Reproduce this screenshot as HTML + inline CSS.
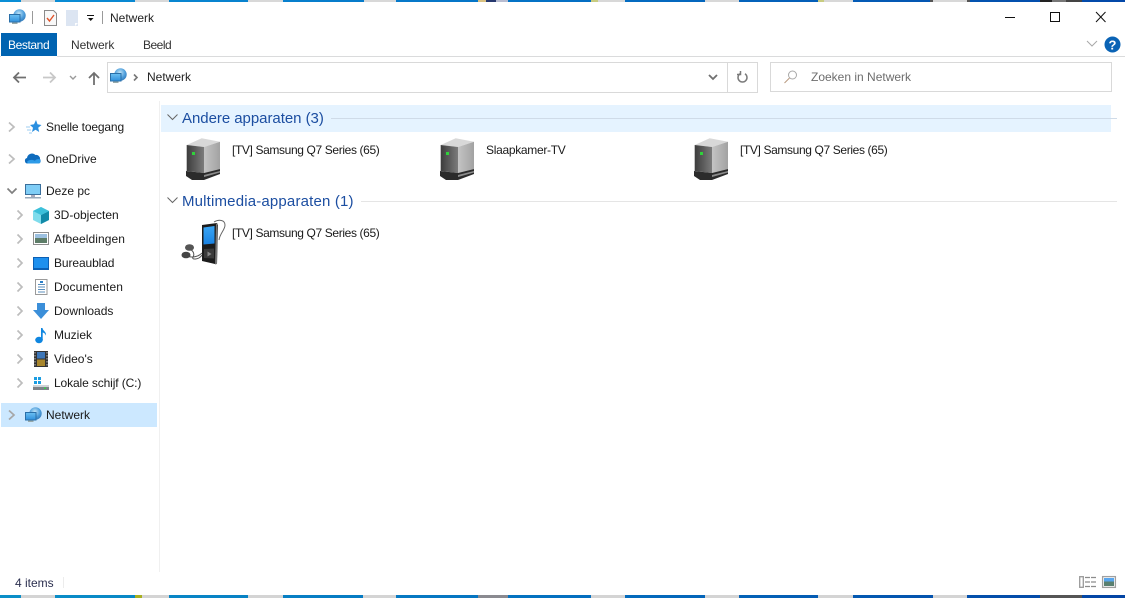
<!DOCTYPE html>
<html lang="nl"><head><meta charset="utf-8"><title>Netwerk</title>
<style>
html,body{margin:0;padding:0;background:#fff}
#w{position:relative;width:1125px;height:598px;overflow:hidden;background:#fff;font-family:"Liberation Sans",sans-serif;font-size:12px;color:#1a1a1a}
.t{position:absolute;white-space:nowrap;line-height:16px}
.b{position:absolute}
svg{position:absolute;overflow:visible}
.g{color:#1c4ea1;font-size:15px;line-height:18px}
.i{letter-spacing:-.37px}
</style></head><body><div id="w">

<svg width="0" height="0" style="left:0;top:0">
<defs>
<radialGradient id="gl" cx=".45" cy=".35" r=".75"><stop offset="0" stop-color="#bfe3f7"/><stop offset=".55" stop-color="#4f9fdc"/><stop offset="1" stop-color="#2a6fb0"/></radialGradient>
<linearGradient id="mn" x1="0" x2="0" y1="0" y2="1"><stop offset="0" stop-color="#6cc0f2"/><stop offset="1" stop-color="#2f8fdc"/></linearGradient>
<linearGradient id="d" x1="0" x2="1" y1="0" y2="0"><stop offset="0" stop-color="#3c3c3c"/><stop offset="1" stop-color="#7c7c7c"/></linearGradient>
<linearGradient id="e" x1="0" x2="1" y1="0" y2="0"><stop offset="0" stop-color="#c4c4c4"/><stop offset="1" stop-color="#a2a2a2"/></linearGradient>
<linearGradient id="scr" x1="0" x2="0" y1="0" y2="1"><stop offset="0" stop-color="#3aa6f5"/><stop offset="1" stop-color="#1a82e2"/></linearGradient>
<g id="net"><circle cx="10.500" cy="6.500" r="6.200" fill="url(#gl)"/><rect x=".5" y="5.500" width="10.500" height="7.500" fill="url(#mn)" stroke="#2a6fa8"/><rect x="3" y="13.500" width="5.500" height="1.500" fill="#9aa"/></g>
<g id="srv">
<path d="M.7 7L15.700 .3 34 3.700 18 9z" fill="#d8d8d8"/>
<path d="M.7 7L18 9v26L.7 33z" fill="url(#d)"/>
<path d="M18 9l16-5.300V31l-16 4z" fill="url(#e)"/>
<rect x="6" y="14" width="3" height="3" fill="#2fd23a"/>
<path d="M0 33l18 2 16-4v5L18 42H6l-6-4z" fill="#2b2b2b"/>
<path d="M18 37l16-4v1.500L18 39z" fill="#8c8c8c"/>
</g>
</defs></svg>

<!-- top / bottom strips -->
<svg style="left:0;top:0" width="1125" height="2">
<defs><linearGradient id="s" x1="0" x2="1" y1="0" y2="0"><stop offset="0" stop-color="#0a8fd6"/><stop offset=".5" stop-color="#0470c4"/><stop offset="1" stop-color="#0348a8"/></linearGradient></defs>
<rect width="1125" height="2" fill="url(#s)"/>
<g fill="#d8d8d8"><rect x="21" width="34" height="2"/><rect x="135" width="34" height="2"/><rect x="248" width="35" height="2"/><rect x="364" width="32" height="2"/><rect x="591" width="34" height="2"/><rect x="705" width="34" height="2"/><rect x="818" width="35" height="2"/><rect x="933" width="34" height="2"/></g>
<rect x="478" width="8" height="2" fill="#d8c080"/><rect x="486" width="10" height="2" fill="#26386e"/><rect x="496" width="12" height="2" fill="#b8bcd0"/>
<rect x="591" width="7" height="2" fill="#c8cc80"/><rect x="818" width="6" height="2" fill="#c8cc80"/>
<rect x="930" width="3" height="2" fill="#555"/><rect x="967" width="3" height="2" fill="#555"/>
<rect x="1040" width="12" height="2" fill="#222"/><rect x="1052" width="14" height="2" fill="#777"/><rect x="1066" width="16" height="2" fill="#444"/>
</svg>
<svg style="left:0;top:595px" width="1125" height="3">
<defs><linearGradient id="s2" x1="0" x2="1" y1="0" y2="0"><stop offset="0" stop-color="#0a8fc8"/><stop offset=".5" stop-color="#0470c0"/><stop offset="1" stop-color="#0344a4"/></linearGradient></defs>
<rect width="1125" height="3" fill="url(#s2)"/>
<g fill="#d4d4d4"><rect x="21" width="34" height="3"/><rect x="135" width="34" height="3"/><rect x="248" width="35" height="3"/><rect x="363" width="33" height="3"/><rect x="591" width="34" height="3"/><rect x="705" width="34" height="3"/><rect x="818" width="35" height="3"/><rect x="933" width="34" height="3"/></g>
<rect x="135" width="7" height="3" fill="#a8b020"/><rect x="478" width="30" height="3" fill="#8a8a90"/><rect x="1040" width="42" height="3" fill="#555"/>
</svg>

<!-- title bar -->
<svg style="left:9px;top:9px" width="17" height="17" viewBox="0 0 17 17"><use href="#net"/></svg>
<div class="b" style="left:32px;top:11px;width:1px;height:13px;background:#9a9a9a"></div>
<svg style="left:44px;top:10px" width="13" height="16" viewBox="0 0 13 16"><path d="M.5.5h9l3 3v12H.5z" fill="#f8f8f8" stroke="#8a8a8a"/><path d="M3 8l2.500 3L10 5" fill="none" stroke="#e0542a" stroke-width="1.400"/></svg>
<svg style="left:66px;top:10px" width="13" height="16" viewBox="0 0 13 16"><path d="M0 0h12v16H0z" fill="#dce5f2"/><path d="M9 16v-3h3" fill="#fff"/></svg>
<svg style="left:87px;top:15px" width="8" height="8"><path d="M0 .5h7" stroke="#111"/><path d="M1 3h5.500L3.700 6z" fill="#111"/></svg>
<div class="b" style="left:102px;top:11px;width:1px;height:13px;background:#9a9a9a"></div>
<div class="t" style="left:110px;top:10px;color:#222">Netwerk</div>
<svg style="left:1000px;top:10px" width="112" height="16" fill="none" stroke="#111" stroke-width="1"><path d="M5 7.500h10"/><rect x="50.500" y="2.500" width="9" height="9"/><path d="M96 2l9.500 10M105.500 2L96 12"/></svg>

<!-- ribbon -->
<div class="b" style="left:1px;top:33px;width:56px;height:23px;background:#0063b1"></div>
<div class="t" style="left:8px;top:37px;color:#fff;letter-spacing:-.4px">Bestand</div>
<div class="t" style="left:71px;top:37px;color:#333;letter-spacing:-.1px">Netwerk</div>
<div class="t" style="left:143px;top:37px;color:#333;letter-spacing:-.5px">Beeld</div>
<div class="b" style="left:57px;top:56px;width:1068px;height:1px;background:#dadbdc"></div>
<div class="b" style="left:0;top:56px;width:1px;height:1px;background:#dadbdc"></div>
<svg style="left:1086px;top:40px" width="12" height="8" fill="none" stroke="#a8a8a8"><path d="M1 1l5 5 5-5"/></svg>
<svg style="left:1104px;top:36px" width="17" height="17"><circle cx="8.500" cy="8.500" r="8" fill="#0a63b5"/><text x="8.500" y="13.500" text-anchor="middle" font-family="Liberation Sans" font-weight="bold" font-size="13" fill="#fff">?</text></svg>

<!-- nav -->
<svg style="left:13px;top:70px" width="90" height="16" fill="none" stroke-width="1.800">
<path d="M1 7.500h12M6 2.500l-5 5 5 5" stroke="#707070"/>
<path d="M30 7.500h12M37 2.500l5 5-5 5" stroke="#c8c8c8"/>
<path d="M57 6l3 3 3-3" stroke="#9a9a9a" stroke-width="1.400"/>
<path d="M81 15V3M76 8l5-5 5 5" stroke="#707070"/>
</svg>
<div class="b" style="left:107px;top:62px;width:649px;height:29px;border:1px solid #d9d9d9"></div>
<div class="b" style="left:727px;top:63px;width:1px;height:29px;background:#d9d9d9"></div>
<svg style="left:110px;top:68px" width="17" height="17" viewBox="0 0 17 17"><use href="#net"/></svg>
<svg style="left:133px;top:74px" width="5" height="7" fill="none" stroke="#777" stroke-width="1.600"><path d="M1 .5l3 3-3 3"/></svg>
<div class="t" style="left:147px;top:69px;color:#222">Netwerk</div>
<svg style="left:708px;top:74px" width="11" height="7" fill="none" stroke="#707070" stroke-width="1.800"><path d="M1 1l4 4 4-4"/></svg>
<svg style="left:737px;top:71px" width="12" height="13" fill="none" stroke="#7a7a7a" stroke-width="1.500"><path d="M3 2.800A4.500 4.500 0 1 0 8 2.800"/><path d="M3.500 0v3.500H0"/></svg>
<div class="b" style="left:770px;top:62px;width:340px;height:28px;border:1px solid #d9d9d9"></div>
<svg style="left:784px;top:70px" width="14" height="14" fill="none" stroke="#a8a8a8"><circle cx="8.500" cy="5" r="4"/><path d="M5.500 8l-5 5" stroke="#b89a80"/></svg>
<div class="t" style="left:811px;top:69px;color:#6d6d6d">Zoeken in Netwerk</div>

<!-- sidebar -->
<div class="b" style="left:159px;top:101px;width:1px;height:471px;background:#f0f0f0"></div>
<div class="b" style="left:1px;top:403px;width:156px;height:24px;background:#cce8ff"></div>
<svg style="left:0;top:110px" width="30" height="315" fill="none" stroke="#bdbdbd" stroke-width="1.700">
<path d="M9 12.500l5 4.500-5 4.500M9 44.500l5 4.500-5 4.500"/>
<path d="M7.500 78.500l4.500 4.500 4.500-4.500" stroke="#808080"/>
<path d="M9 300.500l5 4.500-5 4.500" stroke="#a6a6a6"/>
</svg>
<svg style="left:16px;top:205px" width="8" height="190" fill="none" stroke="#bdbdbd" stroke-width="1.700">
<path d="M1.500 5.500l4.500 4.500-4.500 4.500M1.500 29.500l4.500 4.500-4.500 4.500M1.500 53.500l4.500 4.500-4.500 4.500M1.500 77.500l4.500 4.500-4.500 4.500M1.500 101.500l4.500 4.500-4.500 4.500M1.500 125.500l4.500 4.500-4.500 4.500M1.500 149.500l4.500 4.500-4.500 4.500M1.500 173.500l4.500 4.500-4.500 4.500"/>
</svg>

<svg style="left:26px;top:119px" width="16" height="16"><path d="M10 1l1.500 4.200L15.500 6l-3.300 2.800L13.200 13 9.500 10.700 6 13l1-4.200L4 6l4-.8z" fill="#2a8fe0"/><path d="M0 8h4M1 11h4M3 14h3" stroke="#9ccdf0"/></svg>
<div class="t" style="left:46px;top:119px;letter-spacing:-.15px">Snelle toegang</div>

<svg style="left:25px;top:152px" width="16" height="12"><path d="M2.500 11.500a2.800 2.800 0 0 1-.5-5.500A5 5 0 0 1 10.500 3 3.800 3.800 0 0 1 15 7c1.300 1.500 .7 4.500-1.500 4.500z" fill="#0f6cbd"/><path d="M2.500 11.500h11c1.700 0 2.500-2.200 1.700-4-2-.8-4.200 0-5.200 1.200C7 7.300 4 7.800 2.300 9.300z" fill="#2d9be8"/></svg>
<div class="t" style="left:46px;top:151px">OneDrive</div>

<svg style="left:25px;top:184px" width="16" height="15"><rect x=".5" y=".5" width="15" height="10" fill="#7fcdf6" stroke="#3a6f9c"/><rect x="6" y="11" width="4" height="2" fill="#aab"/><rect y="13" width="16" height="1.500" fill="#9ab"/></svg>
<div class="t" style="left:46px;top:183px">Deze pc</div>

<svg style="left:33px;top:207px" width="16" height="17"><path d="M8 0l8 4v9l-8 4-8-4V4z" fill="#7fdcec"/><path d="M8 8l8-4v9l-8 4z" fill="#128aa8"/><path d="M8 8L0 4l8-4 8 4z" fill="#3cc0da"/></svg>
<div class="t" style="left:54px;top:207px">3D-objecten</div>

<svg style="left:33px;top:232px" width="16" height="13"><rect x=".5" y=".5" width="15" height="12" fill="#fff" stroke="#8c8c8c"/><rect x="2" y="2" width="12" height="4" fill="#9cc0e0"/><rect x="2" y="6" width="12" height="5" fill="#5d7d68"/></svg>
<div class="t" style="left:54px;top:231px;letter-spacing:.08px">Afbeeldingen</div>

<svg style="left:33px;top:257px" width="16" height="13"><rect x=".5" y=".5" width="15" height="12" fill="#1e90ee" stroke="#0b5fb4"/><rect y="11" width="16" height="2" fill="#0b5fb4"/></svg>
<div class="t" style="left:54px;top:255px;letter-spacing:-.1px">Bureaublad</div>

<svg style="left:35px;top:279px" width="13" height="16"><path d="M.5.5h11.500v15H.5z" fill="#fff" stroke="#9a9a9a"/><path d="M3 5.500h7M3 8h7M3 10.500h7M3 13h7" stroke="#5b8fbd"/><rect x="5" y="2" width="3" height="2" fill="#2a7fc8"/></svg>
<div class="t" style="left:54px;top:279px;letter-spacing:.1px">Documenten</div>

<svg style="left:33px;top:303px" width="16" height="16"><path d="M4 0h8v7h4l-8 9-8-9h4z" fill="#3b8fd9"/></svg>
<div class="t" style="left:54px;top:303px">Downloads</div>

<svg style="left:35px;top:327px" width="12" height="17"><ellipse cx="4" cy="13" rx="3.800" ry="3.200" fill="#0f86e0"/><path d="M6 13V1h1.500c.3 3 4 3.500 3.500 7.500-.8-2-2.300-3-3.300-3V13z" fill="#0f86e0"/></svg>
<div class="t" style="left:54px;top:327px">Muziek</div>

<svg style="left:34px;top:351px" width="14" height="16"><rect width="14" height="16" fill="#333"/><rect x="3" y="1" width="8" height="6.500" fill="#3d76b8"/><rect x="3" y="8.500" width="8" height="6.500" fill="#a8862c"/><path d="M1 1v14M13 1v14" stroke="#bbb" stroke-dasharray="1.500 1.500"/></svg>
<div class="t" style="left:54px;top:351px">Video's</div>

<svg style="left:33px;top:377px" width="16" height="13"><rect x="1" width="3" height="3" fill="#1b9de2"/><rect x="5" width="3" height="3" fill="#1b9de2"/><rect x="1" y="4" width="3" height="3" fill="#1b9de2"/><rect x="5" y="4" width="3" height="3" fill="#1b9de2"/><rect y="8" width="16" height="2" fill="#d0d3d6"/><rect y="10" width="16" height="3" fill="#7f8489"/><rect x="11" y="10.500" width="2" height="1.500" fill="#36d24a"/></svg>
<div class="t" style="left:54px;top:375px;letter-spacing:-.12px">Lokale schijf (C:)</div>

<svg style="left:25px;top:407px" width="17" height="17" viewBox="0 0 17 17"><use href="#net"/></svg>
<div class="t" style="left:46px;top:407px">Netwerk</div>

<!-- content -->
<div class="b" style="left:161px;top:105px;width:950px;height:27px;background:#e5f3ff"></div>
<svg style="left:167px;top:114px" width="12" height="7" fill="none" stroke="#666"><path d="M.5.5l5 5 5-5"/></svg>
<div class="t g" style="left:182px;top:110px;letter-spacing:-.04px">Andere apparaten (3)</div>
<div class="b" style="left:331px;top:118px;width:786px;height:1px;background:#cfdbe8"></div>

<svg style="left:167px;top:197px" width="12" height="7" fill="none" stroke="#666"><path d="M.5.5l5 5 5-5"/></svg>
<div class="t g" style="left:182px;top:193px;letter-spacing:.17px">Multimedia-apparaten (1)</div>
<div class="b" style="left:361px;top:201px;width:756px;height:1px;background:#e5e5e5"></div>

<svg style="left:186px;top:138px" width="34" height="43"><use href="#srv"/></svg>
<svg style="left:440px;top:138px" width="34" height="43"><use href="#srv"/></svg>
<svg style="left:694px;top:138px" width="34" height="43"><use href="#srv"/></svg>
<div class="t i" style="left:232px;top:142px">[TV] Samsung Q7 Series (65)</div>
<div class="t" style="left:486px;top:142px;letter-spacing:-.3px">Slaapkamer-TV</div>
<div class="t i" style="left:740px;top:142px">[TV] Samsung Q7 Series (65)</div>

<svg style="left:180px;top:219px" width="48" height="46" fill="none">
<path d="M34 3c5-3 11-2 11 3 0 5-5 8-6 15" stroke="#666"/>
<path d="M22 6l15-2 1 2-1 39-2 0-13-3z" fill="#1c1c1c"/>
<path d="M36 4.500l1.500 .5-.5 40-2 .5z" fill="#777"/>
<path d="M23.500 8.500l11-1.500v17.500l-11 1z" fill="url(#scr)"/>
<path d="M24 30l10-.5v10l-10-.5z" fill="#3a3a3a"/>
<path d="M27.500 32.500l4 2.500-4 2.500z" fill="#888"/>
<path d="M9 30c4 1 6 5 4 8s6 3 9-2M6 37c6 2 12 1 16-3" stroke="#555"/>
<ellipse cx="6" cy="36" rx="4.500" ry="3.300" fill="#444"/><ellipse cx="9.500" cy="28.500" rx="4.500" ry="3.300" fill="#555"/>
</svg>
<div class="t i" style="left:232px;top:225px">[TV] Samsung Q7 Series (65)</div>

<!-- status -->
<div class="t" style="left:15px;top:575px;color:#2b2f4f">4 items</div>
<div class="b" style="left:63px;top:577px;width:1px;height:11px;background:#ececec"></div>
<svg style="left:1079px;top:576px" width="17" height="12" fill="none" stroke-width="1.300">
<rect x=".7" y=".7" width="3.600" height="10.600" stroke="#999"/>
<path d="M6 1.500h5M12 1.500h5M6 6h5M12 6h5M6 10.500h5M12 10.500h5" stroke="#8c8c8c"/>
</svg>
<svg style="left:1102px;top:576px" width="14" height="12"><rect x=".6" y=".6" width="12.800" height="10.800" fill="#fff" stroke="#a0a0a0" stroke-width="1.300"/><rect x="2" y="2" width="10" height="3.500" fill="#58a6ee"/><rect x="2" y="5.500" width="10" height="4.500" fill="#5a8070"/></svg>

</div></body></html>
